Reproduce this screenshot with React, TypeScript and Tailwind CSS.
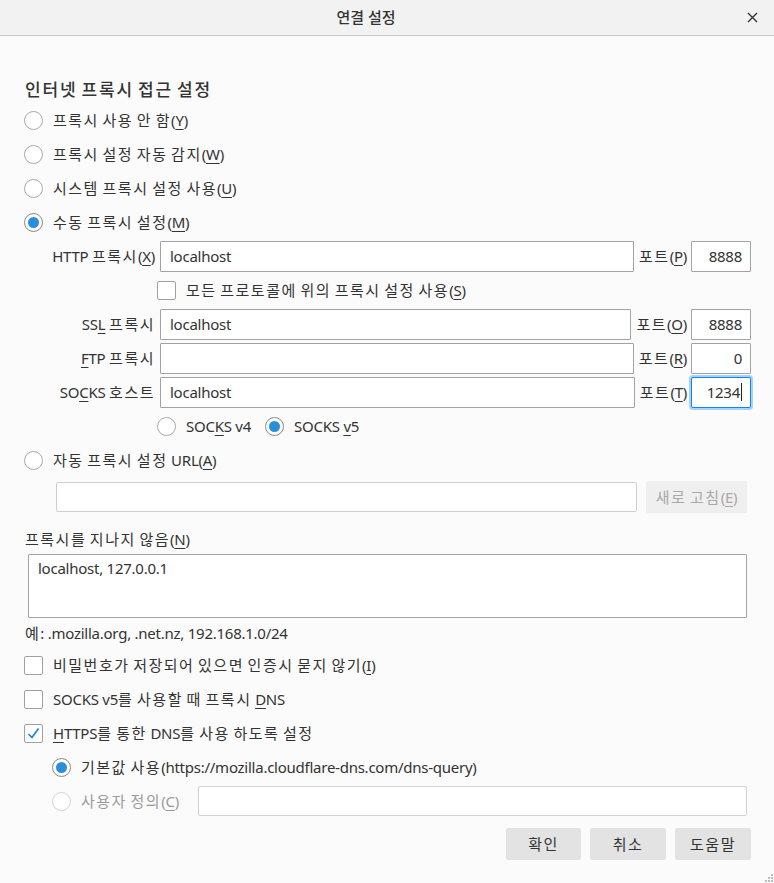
import React from 'react'

const font = { fontFamily: '"Noto Sans", "Noto Sans CJK KR", sans-serif' }

// hangul runs get extra spacing so they take the width of the original UI font
function T({ children, k = 'tracking-[1.5px]' }: { children: React.ReactNode; k?: string }) {
    return (
        <span>
            {React.Children.map(children, (c) =>
                typeof c === 'string'
                    ? c.split(/([가-힣]+)/).map((p, i) =>
                        /[가-힣]/.test(p) ? <span key={i} className={k}>{p}</span> : p
                    )
                    : c
            )}
        </span>
    )
}

function K({ c }: { c: string }) {
    return <span className="underline underline-offset-[3px] decoration-[1px]">{c}</span>
}

function Radio({ checked = false, disabled = false }: { checked?: boolean; disabled?: boolean }) {
    return (
        <span
            className={`flex h-[19px] w-[19px] shrink-0 items-center justify-center rounded-full border bg-white ${disabled ? 'border-[#d4d4d4]' : checked ? 'border-[#8a8a8a]' : 'border-[#a8a8a8]'}`}
        >
            {checked && <span className="h-[11px] w-[11px] rounded-full bg-[#2a8fd8]" />}
        </span>
    )
}

function Check({ checked = false }: { checked?: boolean }) {
    return (
        <span className="flex h-[19px] w-[19px] shrink-0 items-center justify-center rounded-[2px] border border-[#a0a0a0] bg-white">
            {checked && (
                <svg width="15" height="15" viewBox="0 0 15 15">
                    <path d="M2.5 8 L6 11.5 L12.5 2.5" fill="none" stroke="#1a7fd6" strokeWidth="1.6" />
                </svg>
            )}
        </span>
    )
}

function Box({ value = '', className = '', right = false, focus = false }: { value?: string; className?: string; right?: boolean; focus?: boolean }) {
    return (
        <div
            className={`flex h-[31px] items-center bg-white ${right ? 'justify-end pr-[8px]' : 'pl-[9px]'} ${focus ? 'rounded-[2px] border border-[#0a84ff] shadow-[0_0_0_2px_#a9d1fa]' : 'rounded-[1px] border border-[#a3a3a3]'} ${className}`}
        >
            {value}
            {focus && <span className="ml-[1px] h-[18px] w-[1px] bg-[#222]" />}
        </div>
    )
}

function ProxyRow({ label, value, port, portKey, focus = false }: { label: React.ReactNode; value: string; port: string; portKey: string; focus?: boolean }) {
    return (
        <div className="flex h-[34px] items-center pr-[23px]">
            <div className="w-[155px] shrink-0 text-right">{label}</div>
            <Box value={value} className="ml-[5px] flex-1" />
            <span className="ml-[5px] mr-[4px] shrink-0">
                <T>포트(</T><K c={portKey} />)
            </span>
            <Box value={port} right focus={focus} className="w-[60px] shrink-0" />
        </div>
    )
}

function RadioRow({ pl, checked, children }: { pl: string; checked?: boolean; children: React.ReactNode }) {
    return (
        <div className={`flex h-[34px] items-center ${pl}`}>
            <Radio checked={checked} />
            <span className="ml-[10px]"><T>{children}</T></span>
        </div>
    )
}

function CheckRow({ pl, checked, children }: { pl: string; checked?: boolean; children: React.ReactNode }) {
    return (
        <div className={`flex h-[34px] items-center ${pl}`}>
            <Check checked={checked} />
            <span className="ml-[10px]"><T>{children}</T></span>
        </div>
    )
}

export default function App() {
    return (
        <div className="h-[883px] w-[774px] overflow-hidden bg-[#fbfbfb] text-[15px] tracking-[-0.25px] text-[#333]" style={font}>
            <div className="flex h-[36px] items-center border-b border-[#c9c9c9] bg-[#f2f2f2]">
                <div className="flex-1 pl-[2px] text-center text-[15px] font-medium tracking-normal">연결 설정</div>
                <div className="flex w-[44px] items-center justify-center">
                    <svg width="11" height="11" viewBox="0 0 11 11">
                        <path d="M1 1 L10 10 M10 1 L1 10" stroke="#333" strokeWidth="1.4" />
                    </svg>
                </div>
            </div>

            <div className="mt-[40px] flex h-[27px] items-center pl-[25px] text-[17px] font-medium">
                <T k="tracking-[1.8px]">인터넷 프록시 접근 설정</T>
            </div>

            <RadioRow pl="pl-[24px]">프록시 사용 안 함(<K c="Y" />)</RadioRow>
            <RadioRow pl="pl-[24px]">프록시 설정 자동 감지(<K c="W" />)</RadioRow>
            <RadioRow pl="pl-[24px]">시스템 프록시 설정 사용(<K c="U" />)</RadioRow>
            <RadioRow pl="pl-[24px]" checked>수동 프록시 설정(<K c="M" />)</RadioRow>

            <ProxyRow label={<T>HTTP 프록시(<K c="X" />)</T>} value="localhost" port="8888" portKey="P" />
            <CheckRow pl="pl-[157px]">모든 프로토콜에 위의 프록시 설정 사용(<K c="S" />)</CheckRow>
            <ProxyRow label={<T>SS<K c="L" /> 프록시</T>} value="localhost" port="8888" portKey="O" />
            <ProxyRow label={<T><K c="F" />TP 프록시</T>} value="" port="0" portKey="R" />
            <ProxyRow label={<T>SO<K c="C" />KS 호스트</T>} value="localhost" port="1234" portKey="T" focus />

            <div className="flex h-[34px] items-center pl-[157px]">
                <Radio />
                <span className="ml-[10px]">SOC<K c="K" />S v4</span>
                <span className="ml-[14px]"><Radio checked /></span>
                <span className="ml-[10px]">SOCKS <K c="v" />5</span>
            </div>
            <RadioRow pl="pl-[24px]">자동 프록시 설정 URL(<K c="A" />)</RadioRow>
            <div className="flex h-[40px] items-center pl-[56px] pr-[27px]">
                <div className="h-[30px] flex-1 rounded-[2px] border border-[#cfcfcf] bg-white" />
                <div className="ml-[9px] flex h-[32px] w-[101px] items-center justify-center rounded-[2px] bg-[#efefef] text-[#a9a9a9]">
                    <T>새로 고침(<K c="E" />)</T>
                </div>
            </div>

            <div className="flex h-[37px] items-center pl-[25px] pt-[7px]">
                <T>프록시를 지나지 않음(<K c="N" />)</T>
            </div>
            <div className="ml-[28px] mr-[27px] h-[64px] rounded-[1px] border border-[#a3a3a3] bg-white pl-[9px] pt-[2px]">localhost, 127.0.0.1</div>
            <div className="flex h-[30px] items-center pl-[25px]">
                <T>예: .mozilla.org, .net.nz, 192.168.1.0/24</T>
            </div>

            <CheckRow pl="pl-[24px]">비밀번호가 저장되어 있으면 인증시 묻지 않기(<K c="I" />)</CheckRow>
            <CheckRow pl="pl-[24px]">SOCKS v5를 사용할 때 프록시 <K c="D" />NS</CheckRow>
            <CheckRow pl="pl-[24px]" checked><K c="H" />TTPS를 통한 DNS를 사용 하도록 설정</CheckRow>
            <RadioRow pl="pl-[52px]" checked>기본값 사용(https://mozilla.cloudflare-dns.com/dns-query)</RadioRow>
            <div className="flex h-[34px] items-center pl-[52px] pr-[27px]">
                <Radio disabled />
                <span className="ml-[10px] text-[#9a9a9a]"><T>사용자 정의(<K c="C" />)</T></span>
                <div className="ml-[19px] h-[30px] flex-1 rounded-[2px] border border-[#d2d2d2] bg-white" />
            </div>

            <div className="mt-[10px] flex justify-end gap-[9px] pr-[23px]">
                <div className="flex h-[32px] w-[75px] items-center justify-center rounded-[2px] bg-[#e3e3e3]"><T>확인</T></div>
                <div className="flex h-[32px] w-[76px] items-center justify-center rounded-[2px] bg-[#e3e3e3]"><T>취소</T></div>
                <div className="flex h-[32px] w-[76px] items-center justify-center rounded-[2px] bg-[#e3e3e3]"><T>도움말</T></div>
            </div>
            <div className="mt-[14px] flex justify-end pr-[1px]">
                <svg width="8" height="8" viewBox="0 0 8 8">
                    <rect x="6" y="0" width="2" height="2" fill="#bbb" />
                    <rect x="3" y="3" width="2" height="2" fill="#bbb" />
                    <rect x="6" y="3" width="2" height="2" fill="#bbb" />
                    <rect x="0" y="6" width="2" height="2" fill="#bbb" />
                    <rect x="3" y="6" width="2" height="2" fill="#bbb" />
                    <rect x="6" y="6" width="2" height="2" fill="#bbb" />
                </svg>
            </div>
        </div>
    )
}
